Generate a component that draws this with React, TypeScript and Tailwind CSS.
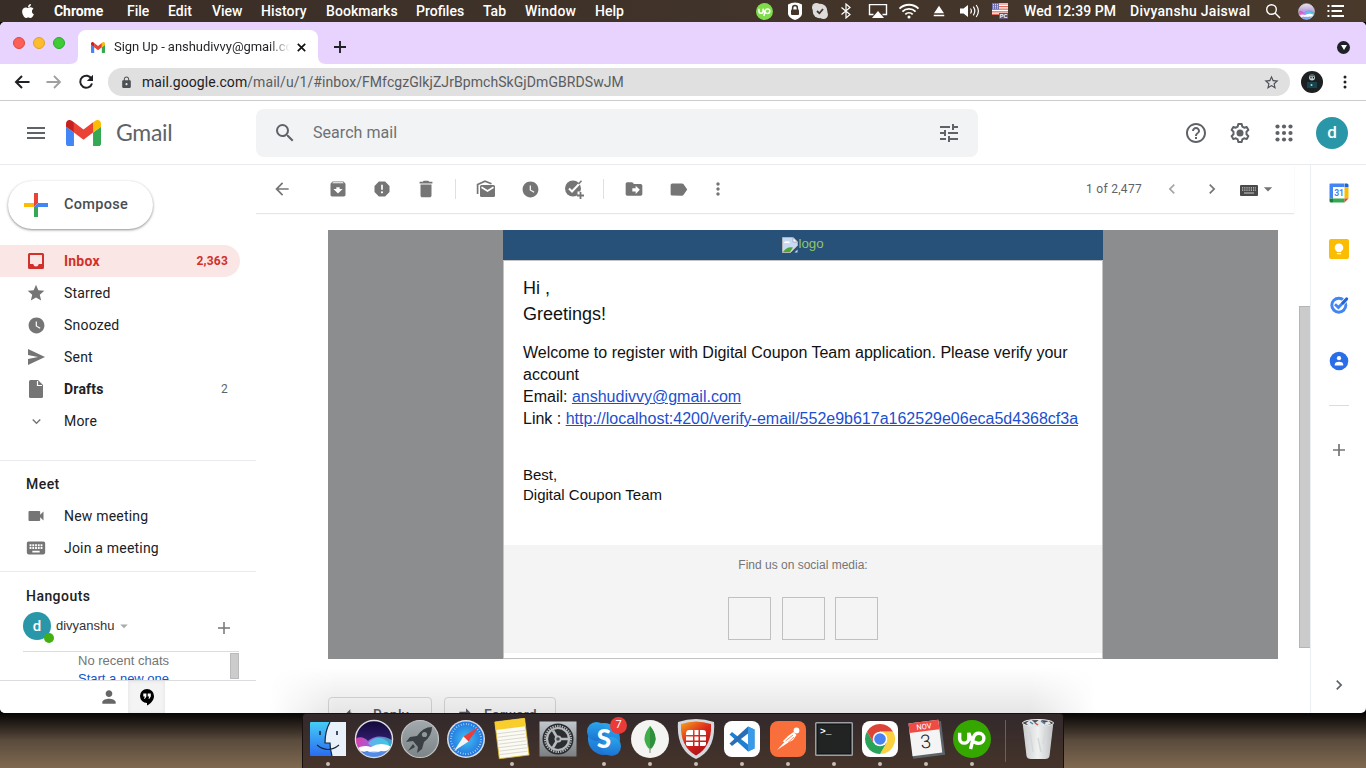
import React from "react";
import {
  MdArchive, MdReport, MdDelete, MdWatchLater, MdDriveFileMove, MdLabel, MdMoreVert, MdArrowBack, MdArrowForward,
  MdLock, MdStarBorder, MdStar, MdExpandMore, MdVideocam, MdKeyboard,
  MdSearch, MdTune, MdHelpOutline, MdChevronLeft, MdChevronRight, MdArrowDropDown,
  MdPerson, MdReply, MdForward, MdEject,
} from "react-icons/md";
import { FaApple } from "react-icons/fa";

const menus: [string, string][] = [
  ["Chrome", "w-[73px] font-bold tracking-[-0.05px]"],
  ["File", "w-[41px]"],
  ["Edit", "w-[44px]"],
  ["View", "w-[49px]"],
  ["History", "w-[65px] tracking-[0.1px]"],
  ["Bookmarks", "w-[90px] tracking-[0.05px]"],
  ["Profiles", "w-[67px]"],
  ["Tab", "w-[42px]"],
  ["Window", "w-[70px] tracking-[0.2px]"],
  ["Help", "w-[40px]"],
];

function Slot({ w, children }: { w: string; children?: React.ReactNode }) {
  return <div className={`flex h-full shrink-0 items-center justify-center ${w}`}>{children}</div>;
}

function UpMark({ size }: { size: number }) {
  return (
    <svg width={size} height={size} viewBox="0 0 40 40" fill="none" stroke="#fff" strokeWidth="3.600" strokeLinecap="butt">
      <path d="M7 13.500V19.500A4.800 4.800 0 0 0 16.600 19.500V13.500Q18.500 21 23 24" />
      <path d="M18.500 30.500L21.500 18.500Q23 14 27.200 14A5.300 5.300 0 0 1 27.200 24.600Q24.500 24.600 22.500 23" />
    </svg>
  );
}

function MenuBar() {
  return (
    <header className="flex h-[22px] items-center bg-linear-to-r from-[#392d27] to-[#48392b] pl-[20px] font-['Roboto',sans-serif] text-[14px] font-medium leading-[22px] text-white">
      <div className="w-[34px] shrink-0"><FaApple size={16} /></div>
      {menus.map(([label, cls]) => (
        <span key={label} className={`shrink-0 whitespace-nowrap ${cls}`}>{label}</span>
      ))}
      <div className="ml-[111px] flex h-full shrink-0 items-center">
        <Slot w="w-[36px]">
          <span className="flex size-[17px] items-center justify-center rounded-full bg-[#7fdc4a]"><UpMark size={17} /></span>
        </Slot>
        <Slot w="w-[25px]">
          <svg width="14" height="18" viewBox="0 0 14 18"><path d="M0 2.500Q7-1.500 14 2.500V12Q13 16 7 18Q1 16 0 12Z" fill="#fff" /><path d="M4.600 8V6a2.400 2.400 0 0 1 4.800 0V8" fill="none" stroke="#44362b" strokeWidth="1.500" /><rect x="3" y="7.500" width="8" height="5.500" rx="1" fill="#44362b" /></svg>
        </Slot>
        <Slot w="w-[26px]">
          <svg width="18" height="18" viewBox="0 0 18 18"><circle cx="9" cy="9" r="7.300" fill="#dedcda" /><circle cx="5.500" cy="5.500" r="4.500" fill="#dedcda" /><circle cx="12.500" cy="12.500" r="4.500" fill="#dedcda" /><path d="M6 9l2.400 2.300L12 7" fill="none" stroke="#44362b" strokeWidth="1.800" /></svg>
        </Slot>
        <Slot w="w-[26px]">
          <svg width="12" height="16" viewBox="0 0 12 16" fill="none" stroke="#fff" strokeWidth="1.200"><path d="M1.500 4.500L10 11.500L6 15V1L10 4.500L1.500 11.500" /></svg>
        </Slot>
        <Slot w="w-[38px]">
          <svg width="20" height="16" viewBox="0 0 20 16"><path d="M5.500 11.500H1.500V1.600H18.500V11.500H14.500" fill="none" stroke="#fff" strokeWidth="1.400" /><path d="M10 8L16 15H4Z" fill="#fff" /></svg>
        </Slot>
        <Slot w="w-[24px]">
          <svg width="22" height="16" viewBox="0 0 22 16" className="shrink-0" fill="none" stroke="#fff" strokeWidth="1.900"><path d="M1.500 5.600a13.500 13.500 0 0 1 19 0M4.400 8.600a9.400 9.400 0 0 1 13.200 0M7.300 11.400a5.300 5.300 0 0 1 7.400 0" /><circle cx="11" cy="14" r="1.500" fill="#fff" stroke="none" /></svg>
        </Slot>
        <Slot w="w-[35px]"><MdEject size={18} /></Slot>
        <Slot w="w-[28px]">
          <svg width="22" height="14" viewBox="0 0 22 14" className="shrink-0"><path d="M1 4.500H4.500L9 1V13L4.500 9.500H1Z" fill="#fff" /><path d="M11.500 4.500q1.800 2.500 0 5M14.300 2.700q3 4.300 0 8.600M17.200 1q4.400 6 0 12" fill="none" stroke="#fff" strokeWidth="1.200" /></svg>
        </Slot>
        <Slot w="w-[31px]">
          <svg width="16" height="16" viewBox="0 0 16 16"><path fill="#fff" d="M0 0H16V12H0Z" /><path stroke="#e06a5c" strokeWidth="1.200" d="M0 1H16M0 3.600H16M0 6.200H16M0 8.800H16M0 11.400H16" /><path fill="#6f6fae" d="M0 0H7V6.500H0Z" /><path stroke="#fff" strokeWidth=".8" strokeDasharray="1 1" d="M1 1.600H6M1 3.300H6M1 5H6" /><rect x="7" y="10" width="9" height="6" fill="#64517c" /><text x="7.700" y="15.300" fontSize="5.600" fontWeight="700" fill="#fff" fontFamily="Liberation Sans">PC</text></svg>
        </Slot>
        <span className="ml-[9px] w-[106px] whitespace-nowrap tracking-[0.08px]">Wed 12:39 PM</span>
        <span className="w-[132px] whitespace-nowrap tracking-[0.28px]">Divyanshu Jaiswal</span>
        <Slot w="w-[22px]">
          <svg width="16" height="16" viewBox="0 0 16 16" fill="none" stroke="#fff" strokeWidth="1.400"><circle cx="6.500" cy="6.500" r="4.800" /><path d="M10 10L15 15" /></svg>
        </Slot>
        <Slot w="w-[44px]"><Siri size={17} light /></Slot>
        <Slot w="w-[15px]">
          <svg width="18" height="12" viewBox="0 0 18 12" className="shrink-0" stroke="#fff" strokeWidth="1.800"><path d="M4.500 1H17M4.500 6H15M4.500 11H17M.500 1H2.400M.500 6H2.400M.500 11H2.400" /></svg>
        </Slot>
      </div>
    </header>
  );
}

function GmailMark({ w, h }: { w: number; h: number }) {
  return (
    <svg width={w} height={h} viewBox="52 42 88 66" preserveAspectRatio="none" className="shrink-0">
      <path fill="#4285f4" d="M58 108h14V74L52 59v43c0 3.32 2.69 6 6 6" />
      <path fill="#34a853" d="M120 108h14c3.32 0 6-2.69 6-6V59l-20 15" />
      <path fill="#fbbc04" d="M120 48v26l20-15v-8c0-7.42-8.47-11.65-14.4-7.2" />
      <path fill="#ea4335" d="M72 74V48l24 18 24-18v26L96 92" />
      <path fill="#c5221f" d="M52 51v8l20 15V48l-5.6-4.2c-5.94-4.45-14.4-.22-14.4 7.2" />
    </svg>
  );
}

function TabStrip() {
  return (
    <div className="flex h-[42px] shrink-0 items-end bg-[#e7d3fd]">
      <div className="flex h-full w-[70px] shrink-0 gap-[8px] pl-[13px] pt-[15px]">
        <span className="size-[12px] rounded-full border border-[#e0443e] bg-[#fb5f57]" />
        <span className="size-[12px] rounded-full border border-[#dea123] bg-[#fcbc2e]" />
        <span className="size-[12px] rounded-full border border-[#26a831] bg-[#3fcb35]" />
      </div>
      <svg width="8" height="8" viewBox="0 0 8 8"><path d="M8 0V8H0Q8 8 8 0Z" fill="#fff" /></svg>
      <div className="flex h-[34px] w-[240px] shrink-0 items-center rounded-t-[8px] bg-white pl-[13px]">
        <GmailMark w={14} h={11} />
        <span className="ml-[9px] w-[176px] overflow-hidden whitespace-nowrap bg-linear-to-r from-[#202124] from-88% to-transparent bg-clip-text font-['Roboto',sans-serif] text-[13px] tracking-[-0.05px] text-transparent">Sign Up - anshudivvy@gmail.com</span>
        <svg width="9" height="9" viewBox="0 0 9 9" className="ml-[7px] shrink-0" stroke="#111" strokeWidth="1.700"><path d="M.800.800L8.200 8.200M8.200.800L.800 8.200" /></svg>
      </div>
      <svg width="8" height="8" viewBox="0 0 8 8"><path d="M0 0V8H8Q0 8 0 0Z" fill="#fff" /></svg>
      <svg width="12" height="12" viewBox="0 0 12 12" className="mb-[11px] ml-[8px]" stroke="#202124" strokeWidth="1.900"><path d="M6 0V12M0 6H12" /></svg>
      <div className="mb-[10px] ml-auto mr-[16px] flex size-[13px] items-center justify-center rounded-full bg-[#202124]">
        <svg width="6" height="5" viewBox="0 0 6 5"><path d="M0 0H6L3 5Z" fill="#fff" /></svg>
      </div>
    </div>
  );
}

function AddressBar() {
  return (
    <div className="flex h-[37px] shrink-0 items-center border-b border-[#cdcdcd] bg-white">
      <div className="flex w-[108px] shrink-0 items-center pl-[14px] text-[#202124]">
        <svg width="16" height="14" viewBox="0 0 16 14" fill="none" stroke="#202124" strokeWidth="2"><path d="M8 1L2 7L8 13M2 7H15.500" /></svg>
        <svg width="16" height="14" viewBox="0 0 16 14" className="ml-[16px]" fill="none" stroke="#a0a0a0" strokeWidth="1.800"><path d="M8 1L14 7L8 13M14 7H.500" /></svg>
        <svg width="16" height="16" viewBox="0 0 16 16" className="ml-[16px]" fill="none" stroke="#202124" strokeWidth="2"><path d="M13.600 5A6 6 0 1 0 14 9.500" /><path d="M15 .800V7H8.800Z" fill="#202124" stroke="none" /></svg>
      </div>
      <div className="flex h-[28px] w-[1182px] shrink-0 items-center rounded-full bg-[#e0e0e0] pl-[12px] pr-[10px]">
        <MdLock size={13} className="text-[#4d5156]" />
        <span className="ml-[9px] whitespace-nowrap font-['Roboto',sans-serif] text-[14px] tracking-[0.07px] text-[#5a5c5f]">
          <span className="text-[#202124]">mail.google.com</span>/mail/u/1/#inbox/FMfcgzGlkjZJrBpmchSkGjDmGBRDSwJM
        </span>
        <MdStarBorder size={17} className="ml-auto text-[#4d5156]" />
      </div>
      <svg width="22" height="22" viewBox="0 0 22 22" className="ml-[11px]"><circle cx="11" cy="11" r="11" fill="#1d2023" /><path d="M6 17h10v-6H6Z" fill="#17454d" /><circle cx="11" cy="6.500" r="3" fill="#c4ced0" /><path d="M8 5.500Q11 0 14 5.500Z" fill="#4b6266" /><circle cx="10" cy="6.800" r=".7" /><circle cx="12.400" cy="6.800" r=".7" /><circle cx="10.500" cy="14" r="1" fill="#a8d8dc" /></svg>
      <svg width="4" height="14" viewBox="0 0 4 14" className="ml-[20px]" fill="#202124"><circle cx="2" cy="2" r="1.500" /><circle cx="2" cy="7" r="1.500" /><circle cx="2" cy="12" r="1.500" /></svg>
    </div>
  );
}

function GmailHeader() {
  return (
    <div className="flex h-[64px] shrink-0 items-center border-b border-[#e8eaed] bg-white text-[#5f6368]">
      <div className="flex w-[256px] shrink-0 items-center pl-[27px]">
        <svg width="18" height="12" viewBox="0 0 18 12" stroke="#5f6368" strokeWidth="2"><path d="M0 1H18M0 6H18M0 11H18" /></svg>
        <span className="ml-[21px]"><GmailMark w={35} h={26} /></span>
        <span className="ml-[15px] font-['Lato',sans-serif] text-[23px] tracking-[-0.300px]">Gmail</span>
      </div>
      <div className="flex h-[48px] w-[722px] shrink-0 items-center rounded-[8px] bg-[#f1f3f4] pl-[17px] pr-[17px]">
        <MdSearch size={24} />
        <span className="ml-[16px] font-['Roboto',sans-serif] text-[16px] tracking-[0.050px] text-[#6e7175]">Search mail</span>
        <MdTune size={24} className="ml-auto" />
      </div>
      <div className="ml-auto flex items-center pr-[18px]">
        <Slot w="w-[44px]"><MdHelpOutline size={24} /></Slot>
        <Slot w="w-[44px]">
          <svg width="24" height="24" viewBox="0 0 24 24"><path d="M10.300 3H13.700L14.300 5.600L16.100 6.700L18.700 5.900L20.400 8.900L18.500 10.800V13.200L20.400 15.100L18.700 18.100L16.100 17.300L14.300 18.400L13.700 21H10.300L9.700 18.400L7.900 17.300L5.300 18.100L3.600 15.100L5.500 13.200V10.800L3.600 8.900L5.300 5.900L7.900 6.700L9.700 5.600Z" fill="none" stroke="#5f6368" strokeWidth="2" strokeLinejoin="round" /><circle cx="12" cy="12" r="3.500" fill="#5f6368" /></svg>
        </Slot>
        <Slot w="w-[44px]">
          <svg width="18" height="18" viewBox="0 0 18 18" fill="#5f6368">
            {[2.500, 9, 15.500].map((y) => [2.500, 9, 15.500].map((x) => <circle key={`${x}-${y}`} cx={x} cy={y} r="2.100" />))}
          </svg>
        </Slot>
        <div className="ml-[10px] flex size-[32px] items-center justify-center rounded-full bg-[#2a97a9] font-['Roboto',sans-serif] text-[17px] font-medium text-white">d</div>
      </div>
    </div>
  );
}

function Draft() {
  return (
    <svg width="20" height="20" viewBox="0 0 20 20"><path d="M3 2.500Q3 1 4.500 1H12L17 6V17.500Q17 19 15.500 19H4.500Q3 19 3 17.500Z" fill="currentColor" /><path d="M11.500 2V6.500H16" stroke="#fff" strokeWidth="1.200" fill="none" /></svg>
  );
}

function NavRow({ icon, label, count, active, bold }: { icon: React.ReactNode; label: string; count?: string; active?: boolean; bold?: boolean }) {
  return (
    <div className={`flex h-[32px] w-[240px] items-center rounded-r-full pl-[26px] pr-[12px] text-[14px] tracking-[0.200px] ${active ? "bg-[#fae6e5] font-bold text-[#d1312a]" : bold ? "font-bold text-[#202124]" : "text-[#202124]"}`}>
      <span className={`flex w-[20px] justify-center ${active ? "" : "text-[#757575]"}`}>{icon}</span>
      <span className="ml-[18px] whitespace-nowrap">{label}</span>
      {count && <span className={`ml-auto text-[12px] ${active ? "font-bold" : "font-normal text-[#5f6368]"}`}>{count}</span>}
    </div>
  );
}

function Sidebar() {
  return (
    <aside className="flex w-[256px] shrink-0 flex-col overflow-hidden bg-white font-['Roboto',sans-serif]">
      <div className="ml-[8px] mt-[16px] flex h-[48px] w-[145px] shrink-0 items-center rounded-full pl-[16px] text-[14.500px] font-medium tracking-[0.300px] text-[#4a4d51] shadow-[0_1px_3px_rgba(60,64,67,.35),0_1px_2px_rgba(60,64,67,.3)]">
        <svg width="24" height="24" viewBox="0 0 24 24"><path fill="#ea4335" d="M10 0H14V10L10 14Z" /><path fill="#fbbc04" d="M0 10H10V14H0Z" /><path fill="#34a853" d="M10 14L14 14V24H10Z" /><path fill="#4285f4" d="M14 10H24V14H10Z" /></svg>
        <span className="ml-[16px]">Compose</span>
      </div>
      <nav className="mt-[16px] shrink-0">
        <NavRow active icon={<svg width="16" height="16" viewBox="0 0 16 16"><path fillRule="evenodd" fill="#d1312a" d="M1.500 0H14.500Q16 0 16 1.500V14.500Q16 16 14.500 16H1.500Q0 16 0 14.500V1.500Q0 0 1.500 0ZM2 2V11H5.200Q5.800 13.500 8 13.500T10.800 11H14V2Z" /></svg>} label="Inbox" count="2,363" />
        <NavRow icon={<MdStar size={20} />} label="Starred" />
        <NavRow icon={<MdWatchLater size={19} />} label="Snoozed" />
        <NavRow icon={<svg width="17" height="16" viewBox="0 0 17 16"><path fill="currentColor" d="M0 0L17 8L0 16V10L10 8L0 6Z" /></svg>} label="Sent" />
        <NavRow icon={<Draft />} bold label="Drafts" count="2" />
        <NavRow icon={<MdExpandMore size={17} />} label="More" />
      </nav>
      <section className="mt-[23px] shrink-0 border-t border-[#e8eaed] pt-[8px]">
        <h2 className="flex h-[31px] items-center pl-[26px] text-[14px] font-medium tracking-[0.450px] text-[#202124]">Meet</h2>
        <NavRow icon={<MdVideocam size={20} />} label="New meeting" />
        <NavRow icon={<MdKeyboard size={22} className="shrink-0" />} label="Join a meeting" />
      </section>
      <section className="mt-[7px] flex min-h-0 grow flex-col border-t border-[#e8eaed] pt-[8px]">
        <h2 className="flex h-[32px] shrink-0 items-center pl-[26px] text-[14px] font-medium tracking-[0.450px] text-[#202124]">Hangouts</h2>
        <div className="mx-[23px] mr-[17px] flex h-[40px] shrink-0 items-start border-b border-[#dadce0] font-['Liberation_Sans',sans-serif] text-[13px] text-[#333]">
          <div className="relative flex size-[28px] items-center justify-center rounded-full bg-[#2a97a9] font-['Roboto',sans-serif] text-[15px] font-medium text-white">
            d<span className="absolute -bottom-[3px] -right-[3px] size-[10px] rounded-full bg-[#43b011]" />
          </div>
          <span className="ml-[5px] mt-[4px]">divyanshu</span>
          <MdArrowDropDown size={18} className="mt-[5px] text-[#aaa]" />
          <svg width="12" height="12" viewBox="0 0 12 12" className="ml-auto mr-[9px] mt-[10px]" stroke="#757575" strokeWidth="1.500"><path d="M6 0V12M0 6H12" /></svg>
        </div>
        <div className="flex h-[28px] shrink-0 overflow-hidden pl-[78px] font-['Liberation_Sans',sans-serif] text-[13px] leading-[17px]">
          <div className="w-[152px]">
            <p className="text-[#757575]">No recent chats</p>
            <p className="leading-[20px] text-[#15c]">Start a new one</p>
          </div>
          <span className="mt-[1px] h-[26px] w-[9px] border border-[#bbb] bg-[#ccc]" />
        </div>
        <div className="flex grow border-t border-[#dadce0]">
          <div className="flex w-[128px] items-center justify-end pr-[9px] text-[#666]"><MdPerson size={20} /></div>
          <div className="flex w-[37px] items-center justify-center bg-[#f4f4f4] shadow-[inset_0_0_4px_rgba(0,0,0,.08)]">
            <svg width="14" height="17" viewBox="0 0 14 17"><path d="M7 0A7 7 0 0 0 7 14V16.500C11 14.500 14 11 14 7A7 7 0 0 0 7 0Z" /><path fill="#fff" d="M3.300 4.500H6.400V7.500L5 9.800H4L4.800 7.600H3.300ZM7.700 4.500H10.800V7.500L9.400 9.800H8.400L9.200 7.600H7.700Z" /></svg>
          </div>
        </div>
      </section>
    </aside>
  );
}

function MailToolbar() {
  return (
    <div className="mr-[16px] flex h-[48px] shrink-0 items-center pl-[4px] text-[#757575] shadow-[0_1px_1px_#e4e7ea]">
      <Slot w="w-[44px] mr-[12px]"><MdArrowBack size={20} /></Slot>
      <Slot w="w-[44px]"><MdArchive size={20} /></Slot>
      <Slot w="w-[44px]"><MdReport size={20} /></Slot>
      <Slot w="w-[44px]"><MdDelete size={22} /></Slot>
      <span className="ml-[7px] mr-[8px] h-[20px] w-px bg-[#e0e0e0]" />
      <Slot w="w-[44px]">
        <svg width="20" height="18" viewBox="0 0 20 18"><path d="M1.600 14V4.500L9 1.200L15.500 3.800" fill="none" stroke="currentColor" strokeWidth="1.700" /><rect x="4" y="5" width="15" height="12" rx="1.500" fill="currentColor" /><path d="M5.500 7.200L11.500 11L17.500 7.200" stroke="#fff" strokeWidth="1.600" fill="none" /></svg>
      </Slot>
      <Slot w="w-[44px]"><MdWatchLater size={19} /></Slot>
      <Slot w="w-[44px]">
        <svg width="20" height="20" viewBox="0 0 20 20"><circle cx="9" cy="9.500" r="8" fill="currentColor" /><path d="M5 9.500L8 12.500L16.500 3.500" fill="none" stroke="#fff" strokeWidth="2" /><path d="M14.500 5L17.500 1.800" stroke="currentColor" strokeWidth="1.600" /><path d="M13.500 12.500H20V20H13.500Z" fill="#fff" /><path d="M16.500 13V20M13 16.500H20" stroke="currentColor" strokeWidth="1.800" /></svg>
      </Slot>
      <span className="ml-[7px] mr-[8px] h-[20px] w-px bg-[#e0e0e0]" />
      <Slot w="w-[44px]"><MdDriveFileMove size={20} /></Slot>
      <Slot w="w-[44px]"><MdLabel size={21} /></Slot>
      <Slot w="w-[36px]"><MdMoreVert size={20} /></Slot>
      <span className="ml-auto whitespace-nowrap font-['Roboto',sans-serif] text-[12px] tracking-[0.300px] text-[#5f6368]">1 of 2,477</span>
      <MdChevronLeft size={20} className="ml-[20px] text-[#a5a5a5]" />
      <MdChevronRight size={20} className="ml-[20px]" />
      <svg width="18" height="11" viewBox="0 0 18 11" className="ml-[18px] mt-[3px]"><rect width="18" height="11" rx="1" fill="#4a4a4a" /><path d="M2 2.800H16M2 5.200H16" stroke="#ccc" strokeWidth="1.200" strokeDasharray="1.200 1" /><path d="M4 8H14" stroke="#ccc" strokeWidth="1.200" /></svg>
      <MdArrowDropDown size={20} className="mr-[16px]" />
    </div>
  );
}

function BrokenImage() {
  return (
    <svg width="16" height="16" viewBox="0 0 16 16" className="shrink-0"><path d="M.500.500H11L15.500 5V8.500L8.500 15.500H.500Z" fill="#c8d9f3" stroke="#b0b4b8" /><path d="M11 .500V5H15.500Z" fill="#fff" stroke="#999" strokeWidth=".6" /><path d="M2 6a2 2 0 0 1 3-1.500A2 2 0 0 1 8 6Z" fill="#fff" /><path d="M1 15Q5 9 11 10.500L8 15Z" fill="#4ca92e" /><path d="M12.500 15.500L15.500 12.500V15.500Z" fill="#c8d9f3" /></svg>
  );
}

function Message() {
  return (
    <div className="ml-[72px] mt-[17px] flex h-[429px] w-[950px] shrink-0 justify-center bg-[#8c8d8f] font-['Liberation_Sans',sans-serif] text-[#111]">
      <div className="flex w-[600px] flex-col">
        <div className="flex h-[30px] shrink-0 items-start justify-center bg-[#275178] pt-[7px] text-[13.300px] leading-[14px] text-[#8fc763]">
          <BrokenImage /><span>logo</span>
        </div>
        <div className="flex grow flex-col border border-[#c3c3c3] bg-white">
          <div className="px-[19px] pt-[14px]">
            <p className="text-[18px] leading-[26px]">Hi ,</p>
            <p className="text-[18px] leading-[26px]">Greetings!</p>
            <div className="mt-[15px] whitespace-nowrap text-[16px] leading-[22px]">
              <p>Welcome to register with Digital Coupon Team application. Please verify your</p>
              <p>account</p>
              <p>Email: <a className="text-[#1b4fd0] underline">anshudivvy@gmail.com</a></p>
              <p>Link : <a className="text-[#1b4fd0] underline">http://localhost:4200/verify-email/552e9b617a162529e06eca5d4368cf3a</a></p>
            </div>
            <div className="mt-[35px] text-[15px] leading-[20px]">
              <p>Best,</p>
              <p>Digital Coupon Team</p>
            </div>
          </div>
          <div className="mb-[5px] mt-auto flex h-[108px] flex-col items-center bg-[#f4f4f4] pt-[12px]">
            <p className="text-[12px] leading-[16px] text-[#757575]">Find us on social media:</p>
            <div className="mt-[24px] flex pr-px">
              <span className="size-[43px] border border-[#c0c0c0]" />
              <span className="ml-[11px] size-[43px] border border-[#c0c0c0]" />
              <span className="ml-[10px] size-[43px] border border-[#c0c0c0]" />
            </div>
          </div>
        </div>
      </div>
    </div>
  );
}

function SidePanel() {
  return (
    <aside className="flex w-[56px] shrink-0 flex-col items-center border-l border-[#eceff1] pt-[18px]">
      <svg width="20" height="20" viewBox="0 0 20 20"><path fill="#fff" d="M4 4H16V16H4Z" /><path fill="#4285f4" d="M1.500.500H15V4H4V15.500H.500V1.500Q.500.500 1.500.500Z" /><path fill="#1967d2" d="M15.500.500H18Q19.500.500 19.500 2V4H15.500Z" /><path fill="#fbbc04" d="M15.500 4H19.500V15.500H15.500Z" /><path fill="#34a853" d="M4 15.500H15.500V19.500H4Z" /><path fill="#188038" d="M.500 15.500H4V19.500H2Q.500 19.500.500 18Z" /><path fill="#ea4335" d="M15.500 15.500H19.500L15.500 19.500Z" /><text x="5.200" y="13.200" fontSize="8.500" fontWeight="700" fill="#4285f4" fontFamily="Roboto">31</text></svg>
      <svg width="20" height="20" viewBox="0 0 20 20" className="mt-[36px]"><rect width="20" height="20" rx="2" fill="#fbbc04" /><path fill="#fff" d="M10 4.500A4.200 4.200 0 0 1 12.200 12.300V13H7.800V12.300A4.200 4.200 0 0 1 10 4.500ZM7.900 13.900H12.100V15.300H7.900Z" /></svg>
      <svg width="20" height="20" viewBox="0 0 20 20" className="mt-[36px]"><circle cx="9.800" cy="10.200" r="7" fill="none" stroke="#4285f4" strokeWidth="2.900" /><path d="M9.300 12.700L17 4.600" fill="none" stroke="#fff" strokeWidth="4.600" /><path d="M6 9.300L9.400 12.500L14 7.800" fill="none" stroke="#4285f4" strokeWidth="2.800" /><path d="M14 7.800L17.600 4" stroke="#2463d6" strokeWidth="3.200" strokeLinecap="round" /></svg>
      <svg width="20" height="20" viewBox="0 0 20 20" className="mt-[36px]"><circle cx="10" cy="10" r="9.300" fill="#2a6de9" /><circle cx="10" cy="7.200" r="2.100" fill="#fff" /><path d="M5.800 14.500V13Q6.500 10.700 10 10.700T14.200 13V14.500Z" fill="#fff" /></svg>
      <span className="mt-[34px] h-px w-[20px] bg-[#dadce0]" />
      <svg width="12" height="12" viewBox="0 0 12 12" className="mt-[38px]" stroke="#757575" strokeWidth="1.700"><path d="M6 0V12M0 6H12" /></svg>
      <MdChevronRight size={20} className="mb-[18px] mt-auto text-[#5f6368]" />
    </aside>
  );
}

function Siri({ size, light }: { size: number; light?: boolean }) {
  const id = light ? "siri-light" : "siri-dark";
  return (
    <svg width={size} height={size} viewBox="0 0 40 40">
      <defs>
        <linearGradient id={id} x1="0" y1="0" x2="0" y2="1">
          <stop offset="0" stopColor={light ? "#e9e4ef" : "#120a38"} />
          <stop offset=".450" stopColor={light ? "#b9a3dc" : "#2c1a63"} />
          <stop offset="1" stopColor={light ? "#f4f4ff" : "#2c4fa8"} />
        </linearGradient>
        <linearGradient id={`${id}-w`}><stop offset="0" stopColor="#ff3fae" /><stop offset=".450" stopColor="#b06cf0" /><stop offset="1" stopColor="#25c9cf" /></linearGradient>
        <clipPath id={`${id}-c`}><circle cx="20" cy="20" r="18" /></clipPath>
      </defs>
      <circle cx="20" cy="20" r="18.500" fill={`url(#${id})`} stroke="#dcdce2" strokeWidth="1.500" />
      <g clipPath={`url(#${id}-c)`}>
        <path d="M0 21Q7 15 14 22Q24 13 40 22V31Q30 36 20 31Q8 36 0 28Z" fill={`url(#${id}-w)`} opacity=".850" />
        <path d="M14 24Q24 14 34 23Q38 30 30 31Q20 32 14 24Z" fill="#3fd9f0" opacity=".700" />
        <path d="M2 30Q9 25 17 28Q27 22 38 28Q34 33 27 32Q20 36 13 32Q8 34 2 30Z" fill="#fff" />
        <path d="M4 34Q20 31 36 34L30 40H10Z" fill="#5f9cf7" opacity=".800" />
      </g>
    </svg>
  );
}

const dock: { name: string; open?: boolean; art: React.ReactNode }[] = [
  {
    name: "finder", open: true, art: (
      <svg width="40" height="40" viewBox="0 0 40 40"><defs><linearGradient id="fa" x1="0" y1="0" x2="0" y2="1"><stop stopColor="#45cdf6" /><stop offset="1" stopColor="#2a6cf0" /></linearGradient></defs><rect x="2" y="3" width="36" height="34" rx="1" fill="url(#fa)" /><path d="M22 3H38V37H24Q22 30 22 24H17Q17 12 22 3Z" fill="#e9f1fa" /><path d="M22 3Q17 12 17 24H22Q22 30 24 37M9 26Q20 35 31 26" fill="none" stroke="#16263d" strokeWidth="1.200" /><path d="M12 12V16M29 12V16" stroke="#16263d" strokeWidth="1.600" /></svg>
    ),
  },
  { name: "siri", art: <Siri size={40} /> },
  {
    name: "launchpad", art: (
      <svg width="40" height="40" viewBox="0 0 40 40"><defs><linearGradient id="lp" x1="0" y1="0" x2="0" y2="1"><stop stopColor="#a3a9ad" /><stop offset="1" stopColor="#7c8488" /></linearGradient></defs><circle cx="20" cy="20" r="18.500" fill="url(#lp)" stroke="#bfc4c7" strokeWidth="1.200" /><path d="M32 8Q23 8 17 17L10 18L6 23L13 22L18 28L17 34L22 30L24 23Q32 17 32 8Z" fill="#3a4044" /><circle cx="24.500" cy="15.500" r="2.600" fill="#90979b" /><path d="M13 25L8 32L15 28Z" fill="#3a4044" /></svg>
    ),
  },
  {
    name: "safari", art: (
      <svg width="40" height="40" viewBox="0 0 40 40"><circle cx="20" cy="20" r="19" fill="#d9dde1" /><defs><radialGradient id="sf"><stop stopColor="#3fc2f4" /><stop offset="1" stopColor="#2273dd" /></radialGradient></defs><circle cx="20" cy="20" r="17.500" fill="url(#sf)" /><circle cx="20" cy="20" r="15" fill="none" stroke="#bfe2fa" strokeWidth="2" strokeDasharray=".7 1.900" /><path d="M32 8L22.500 22.500L17.500 17.500Z" fill="#f03c36" /><path d="M8 32L17.500 17.500L22.500 22.500Z" fill="#f2f4f5" /></svg>
    ),
  },
  {
    name: "notes", open: true, art: (
      <svg width="40" height="42" viewBox="0 0 40 42"><g transform="rotate(-7 20 21)"><rect x="5" y="2" width="30" height="37" fill="#fbfaf3" stroke="#d8b52c" strokeWidth=".8" /><path d="M5 2H35V10H5Z" fill="#f9cd2c" /><path d="M6 14H34M6 17.500H34M6 21H34M6 24.500H34M6 28H34M6 31.500H34M6 35H34" stroke="#d3d2cb" strokeWidth=".8" /></g></svg>
    ),
  },
  {
    name: "settings", art: (
      <svg width="40" height="40" viewBox="0 0 40 40"><defs><linearGradient id="st" x1="0" y1="0" x2="0" y2="1"><stop stopColor="#c0c7cd" /><stop offset="1" stopColor="#7b7f83" /></linearGradient></defs><rect x="1.500" y="2.500" width="37" height="35" fill="url(#st)" /><circle cx="20" cy="20" r="15.500" fill="#2b2e30" /><circle cx="20" cy="20" r="13" fill="none" stroke="#b6babd" strokeWidth="2" strokeDasharray="1.300 1.100" /><circle cx="20" cy="20" r="11" fill="none" stroke="#b6babd" strokeWidth="2.200" /><path d="M20 20L30 20M20 20L15 11.500M20 20L15 28.500" stroke="#b6babd" strokeWidth="2.600" /><circle cx="20" cy="20" r="3.500" fill="#b6babd" /><circle cx="20" cy="20" r="1.800" fill="#44484b" /></svg>
    ),
  },
  {
    name: "skype", open: true, art: (
      <div className="relative size-[40px]">
        <svg width="40" height="40" viewBox="0 0 40 40"><defs><linearGradient id="sk" x1="0" y1="0" x2="0" y2="1"><stop stopColor="#2aa6ea" /><stop offset="1" stopColor="#1c72d3" /></linearGradient></defs><g fill="url(#sk)"><circle cx="20" cy="20" r="16" /><circle cx="12.500" cy="12.500" r="9.500" /><circle cx="27.500" cy="27.500" r="9.500" /></g><text x="20" y="29" textAnchor="middle" fontSize="26" fontWeight="900" fill="#fff" fontFamily="Lato">S</text></svg>
        <span className="absolute -right-[3px] -top-[2px] flex size-[17px] items-center justify-center rounded-full bg-[#eb3b39] font-['Roboto',sans-serif] text-[11px] text-white">7</span>
      </div>
    ),
  },
  {
    name: "mongo", open: true, art: (
      <svg width="40" height="40" viewBox="0 0 40 40"><circle cx="20" cy="20" r="19" fill="#f4f4f2" /><path d="M20 7Q31 20 20 31Q9 20 20 7Z" fill="#3fae4a" /><path d="M20 7Q31 20 20 31Z" fill="#2f8f3c" /><path d="M20 29V34" stroke="#9a8" strokeWidth="1.400" /></svg>
    ),
  },
  {
    name: "shield", open: true, art: (
      <svg width="40" height="42" viewBox="0 0 40 42"><defs><linearGradient id="sh" x1="0" y1="0" x2=".6" y2="1"><stop stopColor="#f7a61c" /><stop offset=".5" stopColor="#dd2a1c" /><stop offset="1" stopColor="#b0121a" /></linearGradient></defs><path d="M2 4Q20-2 38 4Q40 32 20 41Q0 32 2 4Z" fill="#d4d9de" /><path d="M5 6Q20 1 35 6Q36 29 20 37.500Q4 29 5 6Z" fill="url(#sh)" /><g fill="#fff"><path d="M13 12H17V17H10V15Q10.500 12 13 12ZM18.500 12H22.500V17H18.500ZM24 12H27Q30 12 30 15V17H24ZM10 18.500H17V22.500H10ZM18.500 18.500H22.500V22.500H18.500ZM24 18.500H30V22.500H24ZM10 24H17V28H13Q10 28 10 26ZM18.500 24H22.500V28H18.500ZM24 24H30V26Q30 28 27 28H24Z" /></g></svg>
    ),
  },
  {
    name: "code", open: true, art: (
      <svg width="40" height="40" viewBox="0 0 40 40"><rect x="2" y="2" width="36" height="36" rx="8" fill="#fff" /><path d="M26 7.500L32.500 10.500V29.500L26 32.500L7.500 15.500L10 13L26 25.500Z" fill="#1f7fd0" /><path d="M26 7.500V14.500L10 27L7.500 24.500Z" fill="#2a6fb5" /><path d="M26 7.500L32.500 10.500V29.500L26 32.500Z" fill="#3a9ae8" /></svg>
    ),
  },
  {
    name: "postman", open: true, art: (
      <svg width="40" height="40" viewBox="0 0 40 40"><rect x="2" y="2" width="36" height="36" rx="8" fill="#f96f3c" /><circle cx="28.500" cy="11.500" r="2.900" fill="#fff" /><path d="M25.500 13L28.500 16L25 21L19.500 24L9 31L16.500 23L14.500 22.500L20 17Z" fill="#fff" /><path d="M17.500 22L25 16M20 23.500L26 18" stroke="#f96f3c" strokeWidth=".8" /></svg>
    ),
  },
  {
    name: "terminal", open: true, art: (
      <svg width="40" height="40" viewBox="0 0 40 40"><rect x="1" y="3" width="38" height="34" rx="1.500" fill="#9a9fa3" /><rect x="2.500" y="4.500" width="35" height="31" fill="#161817" /><rect x="4" y="6" width="32" height="28" fill="#222423" /><text x="6" y="14.500" fontSize="9.500" fontWeight="700" fill="#fff" fontFamily="Liberation Mono">&gt;_</text></svg>
    ),
  },
  {
    name: "chrome", open: true, art: (
      <svg width="40" height="40" viewBox="0 0 40 40"><rect x="2" y="2" width="36" height="36" rx="8" fill="#fff" /><path d="M20 35A15 15 0 0 0 33 12.500H20L26.500 23.800Z" fill="#fdd03f" /><path d="M7.010 12.500A15 15 0 0 0 20 35L26.500 23.700L13.500 23.700Z" fill="#29a35a" /><path d="M7.010 12.500A15 15 0 0 1 33 12.500H20L13.500 23.700Z" fill="#dc4437" /><circle cx="20" cy="20" r="7.300" fill="#fff" /><circle cx="20" cy="20" r="5.800" fill="#4a82f0" /></svg>
    ),
  },
  {
    name: "calendar", open: true, art: (
      <svg width="40" height="40" viewBox="0 0 40 40"><g transform="rotate(-7 20 20)"><rect x="5" y="4" width="32" height="34" fill="#5d6469" /><rect x="4.500" y="2.500" width="30" height="33" fill="#f4f4f4" /><path d="M4.500 2.500H34.500V12H4.500Z" fill="#ef4a43" /><text x="19.500" y="10" textAnchor="middle" fontSize="7.500" fill="#fff" fontFamily="Roboto">NOV</text><text x="19.500" y="29" textAnchor="middle" fontSize="19" fontWeight="300" fill="#222" fontFamily="Roboto">3</text></g></svg>
    ),
  },
  { name: "upwork", open: true, art: <span className="flex size-[38px] items-center justify-center rounded-full bg-[#35a800]"><UpMark size={38} /></span> },
];

function Dock() {
  return (
    <div className="flex h-[55px] bg-linear-to-b from-[#080605] via-[#5a4b3d] via-50% to-[#806950] pl-[302px]">
      <div className="flex w-[762px] rounded-t-[4px] border-x border-t border-[#17100e] bg-linear-to-b from-[#33292b] to-[#45342a] pl-[2px]">
        {dock.map((d) => (
          <div key={d.name} className="flex w-[46px] shrink-0 flex-col items-center">
            <div className="flex h-[48px] items-center pt-[1px]">{d.art}</div>
            {d.open && <span className="size-[4px] rounded-full bg-[#c9bdb4]" />}
          </div>
        ))}
        <span className="ml-[10px] mt-[6px] h-[42px] w-px bg-[#6b605a]" />
        <svg width="34" height="42" viewBox="0 0 34 42" className="ml-[15px] mt-[4px]"><defs><linearGradient id="tr"><stop stopColor="#c9cbcc" /><stop offset=".5" stopColor="#f0f1f1" /><stop offset="1" stopColor="#bcbec0" /></linearGradient></defs><path d="M1.500 4L5.500 38Q6 41 10 41H24Q28 41 28.500 38L32.500 4Z" fill="url(#tr)" /><ellipse cx="17" cy="5" rx="15.500" ry="3.500" fill="#4b4c4e" stroke="#eee" /><path d="M5 5L10 1.500L14 5L19 1L23 5L28 3L30 6L20 9L8 8Z" fill="#e4e6e8" /><path d="M9 4L12 6M20 3L24 6" stroke="#4a7fb8" strokeWidth="1.500" /><path d="M14 5L17 7" stroke="#c8543e" strokeWidth="1.500" /><path d="M9 14L12 34M17 20L20 34M25 12L22 26" stroke="#d5d7d8" strokeWidth="1.500" /></svg>
      </div>
    </div>
  );
}

export default function App() {
  return (
    <div className="h-[768px] w-[1366px] overflow-hidden bg-[#0a0807]">
      <MenuBar />
      <div className="relative flex h-[691px] flex-col overflow-hidden rounded-[5px] bg-white">
        <TabStrip />
        <AddressBar />
        <GmailHeader />
        <div className="flex min-h-0 grow">
          <Sidebar />
          <main className="flex min-w-0 grow overflow-hidden">
            <div className="flex w-[1054px] shrink-0 flex-col">
              <MailToolbar />
              <div className="flex min-h-0 grow overflow-hidden">
                <div className="flex w-[1043px] shrink-0 flex-col">
                  <Message />
                  <div className="ml-[72px] mt-[38px] flex shrink-0 gap-[12px] font-['Roboto',sans-serif] text-[14px] font-medium tracking-[0.250px] text-[#5f6368]">
                    <div className="flex h-[36px] w-[104px] items-center rounded-[4px] border border-[#dadce0] pl-[13px]"><MdReply size={20} /><span className="ml-[11px]">Reply</span></div>
                    <div className="flex h-[36px] w-[112px] items-center rounded-[4px] border border-[#dadce0] pl-[11px]"><MdForward size={20} /><span className="ml-[8px]">Forward</span></div>
                  </div>
                </div>
                <span className="mt-[93px] h-[342px] w-[11px] border border-r-0 border-[#b5b5b5] bg-[#cbcbcb]" />
              </div>
            </div>
          </main>
          <SidePanel />
        </div>
        <div className="pointer-events-none absolute bottom-0 left-[270px] h-[46px] w-[826px] bg-linear-to-b from-transparent to-black/10 mask-x-from-92% mask-x-to-100%" />
      </div>
      <Dock />
    </div>
  );
}
